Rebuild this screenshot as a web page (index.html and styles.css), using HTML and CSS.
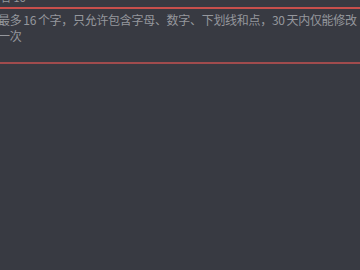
FILE: index.html
```html
<!DOCTYPE html>
<html lang="zh-CN">
<head>
<meta charset="utf-8">
<title>修改用户名</title>
<link rel="stylesheet" href="styles.css">
</head>
<body>
<div class="field">
  <div class="counter"><span>名 16</span></div>
  <div class="rule rule-top"></div>
  <p class="hint">最多 16 个字，只允许包含字母、数字、下划线和点，30 天内仅能修改一次</p>
  <div class="rule rule-bottom"></div>
</div>
</body>
</html>
```
FILE: styles.css
```css
html, body {
  margin: 0;
  padding: 0;
  background: #383a42;
  width: 360px;
  height: 270px;
  overflow: hidden;
}
.field {
  display: flex;
  flex-direction: column;
  font-family: "Noto Sans CJK SC", "Noto Sans", sans-serif;
  color: #95979d;
}
.counter {
  height: 7px;
  overflow: hidden;
  display: flex;
  align-items: flex-end;
  font-size: 11px;
}
.counter span {
  line-height: 16px;
  margin-bottom: 2px;
}
.rule {
  height: 2px;
}
.rule-top {
  background: #c74f4c;
}
.rule-bottom {
  background: #a04b4d;
}
.hint {
  margin: 0 0 0 -2px;
  width: 362px;
  padding: 3px 0 18px;
  font-size: 12px;
  line-height: 16px;
  letter-spacing: -0.3px;
  word-spacing: -0.5px;
}
```
